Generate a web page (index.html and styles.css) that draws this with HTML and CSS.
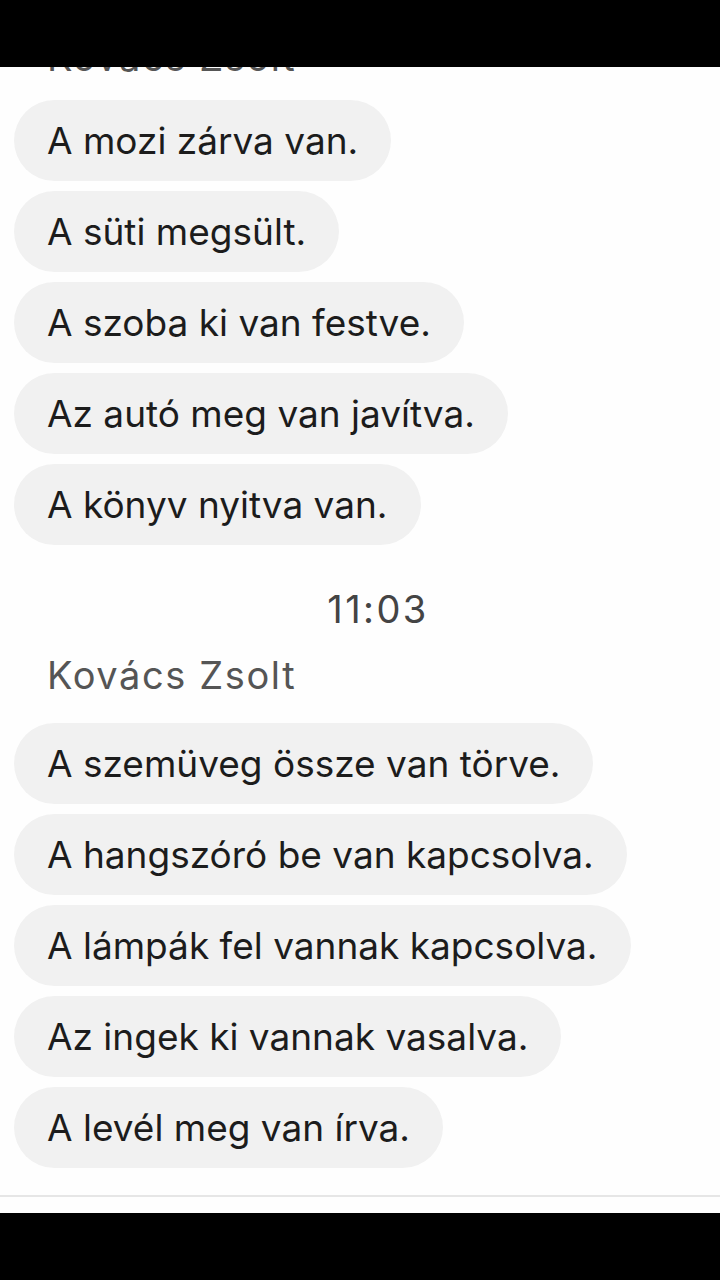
FILE: index.html
```html
<!DOCTYPE html>
<html>
    <head>
        <meta charset="UTF-8">
        <title>Kovács Zsolt</title>
        <link rel="stylesheet" href="styles.css">
    </head>
    <body>
        <div class="bar"></div>
        <div id="chat">
            <div class="feed">
                <div class="name">Kovács Zsolt</div>
                <div class="group">
                    <div class="msg">A mozi zárva van.</div>
                    <div class="msg">A süti megsült.</div>
                    <div class="msg">A szoba ki van festve.</div>
                    <div class="msg">Az autó meg van javítva.</div>
                    <div class="msg">A könyv nyitva van.</div>
                </div>
                <div class="time">11:03</div>
                <div class="name">Kovács Zsolt</div>
                <div class="group">
                    <div class="msg">A szemüveg össze van törve.</div>
                    <div class="msg">A hangszóró be van kapcsolva.</div>
                    <div class="msg">A lámpák fel vannak kapcsolva.</div>
                    <div class="msg">Az ingek ki vannak vasalva.</div>
                    <div class="msg">A levél meg van írva.</div>
                </div>
            </div>
        </div>
        <div class="composer"></div>
        <div class="bar"></div>
    </body>
</html>
```

FILE: styles.css
```css
body {
    margin: 0;
    width: 720px;
    height: 1280px;
    background: #fefefe;
    font-family: Inter, "Noto Sans", sans-serif;
    overflow: hidden;
}
.bar {
    height: 67px;
    background: #000;
}
#chat {
    height: 1128px;
    overflow: hidden;
}
.feed {
    margin-top: -31px;
    padding-left: 14px;
}
.name {
    font-size: 38px;
    line-height: 43px;
    letter-spacing: 1.6px;
    color: #555;
    padding-left: 33px;
    margin-bottom: 26px;
}
.name:first-child {
    margin-bottom: 21px;
}
.group {
    display: flex;
    flex-direction: column;
    align-items: flex-start;
    gap: 10px;
}
.msg {
    background: #f1f1f1;
    color: #1c1c1c;
    font-size: 37px;
    line-height: 43px;
    padding: 19px 33px;
    border-radius: 41px;
}
.time {
    font-size: 38px;
    line-height: 43px;
    letter-spacing: 2.4px;
    color: #444;
    text-align: center;
    padding-left: 22px;
    margin: 43px 0 23px;
}
.composer {
    height: 16px;
    border-top: 2px solid #e6e6e6;
    background: #fefefe;
}
```
